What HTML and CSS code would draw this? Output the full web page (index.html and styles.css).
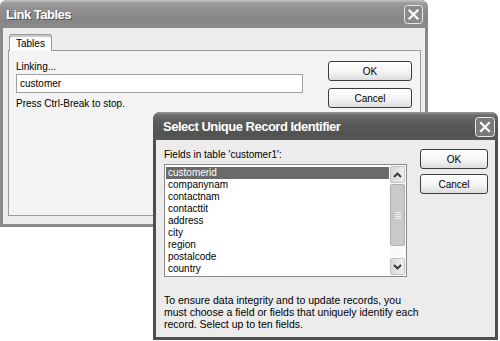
FILE: index.html
```html
<!DOCTYPE html>
<html lang="en">
<head>
  <meta charset="UTF-8" />
  <title>Link Tables</title>
  <link rel="stylesheet" href="styles.css">
</head>
<body>
  <div class="desktop">

    <!-- back window -->
    <div class="window win-link">
      <div class="titlebar">
        <span class="title">Link Tables</span>
        <span class="close">
          <svg width="19" height="19" viewBox="0 0 19 19">
            <rect x="0.5" y="0.5" width="18" height="18" rx="3" fill="#8a8a8a" stroke="#e8e8e8"/>
            <path d="M5.5 5.5 L13.5 13.5 M13.5 5.5 L5.5 13.5" stroke="#fff" stroke-width="2.2" stroke-linecap="square"/>
          </svg>
        </span>
      </div>
      <div class="win-body">
        <div class="tabs"><div class="tab">Tables</div></div>
        <div class="tab-panel">
          <div class="panel-main">
            <div class="label">Linking...</div>
            <div class="textbox">customer</div>
            <div class="label hint">Press Ctrl-Break to stop.</div>
          </div>
          <div class="buttons link-buttons">
            <button class="btn">OK</button>
            <button class="btn">Cancel</button>
          </div>
        </div>
      </div>
    </div>

    <!-- front window -->
    <div class="window win-select">
      <div class="titlebar dark">
        <span class="title">Select Unique Record Identifier</span>
        <span class="close">
          <svg width="20" height="20" viewBox="0 0 20 20">
            <rect x="0.5" y="0.5" width="19" height="19" rx="3" fill="#7a7a7a" stroke="#e8e8e8"/>
            <path d="M6 6 L14 14 M14 6 L6 14" stroke="#fff" stroke-width="2.2" stroke-linecap="square"/>
          </svg>
        </span>
      </div>
      <div class="win-body select-body">
        <div class="select-main">
          <div class="label">Fields in table 'customer1':</div>
          <div class="listbox">
            <ul class="items">
              <li class="selected">customerid</li>
              <li>companynam</li>
              <li>contactnam</li>
              <li>contacttit</li>
              <li>address</li>
              <li>city</li>
              <li>region</li>
              <li>postalcode</li>
              <li>country</li>
            </ul>
            <div class="scrollbar">
              <div class="arrow">
                <svg width="9" height="6" viewBox="0 0 9 6"><path d="M1 5 L4.5 1.5 L8 5" fill="none" stroke="#333" stroke-width="1.8"/></svg>
              </div>
              <div class="track">
                <div class="thumb"><span></span><span></span><span></span><span></span></div>
              </div>
              <div class="arrow">
                <svg width="9" height="6" viewBox="0 0 9 6"><path d="M1 1 L4.5 4.5 L8 1" fill="none" stroke="#333" stroke-width="1.8"/></svg>
              </div>
            </div>
          </div>
          <p class="note">To ensure data integrity and to update records, you must choose a field or fields that uniquely identify each record. Select up to ten fields.</p>
        </div>
        <div class="buttons select-buttons">
          <button class="btn">OK</button>
          <button class="btn">Cancel</button>
        </div>
      </div>
    </div>

  </div>
</body>
</html>
```

FILE: styles.css
```css
body {
  margin: 0;
  background: #fff;
  font-family: "Liberation Sans", Arial, sans-serif;
  font-size: 10px;
  color: #000;
}

.desktop {
  position: relative;
  width: 500px;
  height: 341px;
  overflow: hidden;
}

.window {
  position: absolute;
  display: flex;
  flex-direction: column;
  box-sizing: border-box;
  background: #6c6c6c;
  border-radius: 7px 7px 0 0;
  padding: 0 3px 3px 3px;
}

.win-link {
  left: 0;
  top: 0;
  width: 428px;
  height: 227px;
  background: #8a8a8a;
}

.win-select {
  left: 153px;
  top: 112px;
  width: 345px;
  height: 228px;
  background: #4e4e4e;
}

.titlebar {
  height: 28px;
  margin: 0 -3px;
  padding: 0 5px 0 6px;
  display: flex;
  align-items: center;
  justify-content: space-between;
  border-radius: 7px 7px 0 0;
  background: linear-gradient(#c4c4c4 0, #9c9c9c 3px, #8e8e8e 10px, #868686 22px, #8e8e8e 28px);
}

.titlebar.dark {
  padding-left: 10px;
  padding-right: 3px;
  background: linear-gradient(#9a9a9a 0, #6c6c6c 3px, #5c5c5c 10px, #525252 22px, #5a5a5a 28px);
}

.title {
  font-weight: bold;
  font-size: 13px;
  letter-spacing: -0.5px;
  color: #fff;
  text-shadow: 1px 1px 0 #555;
  margin-top: 1px;
}

.close {
  display: flex;
  margin-top: 1px;
}

.win-body {
  flex: 1;
  background: #ececec;
  display: flex;
  flex-direction: column;
  padding: 6px 4px 8px 5px;
}

.tabs {
  display: flex;
  padding-left: 1px;
}

.tab {
  height: 16px;
  padding: 0 6px;
  line-height: 17px;
  background: #fbfbfb;
  border: 1px solid #9a9a9a;
  border-bottom: none;
  border-radius: 3px 3px 0 0;
  box-shadow: inset 0 2px 0 #c8c8c8;
  margin-bottom: -1px;
  position: relative;
}

.tab-panel {
  flex: 1;
  display: flex;
  justify-content: space-between;
  background: #f3f3f3;
  border: 1px solid #9a9a9a;
  padding: 9px 8px 0 7px;
}

.label {
  line-height: 13px;
}

.textbox {
  width: 282px;
  height: 17px;
  margin: 1px 0 4px;
  padding-left: 3px;
  line-height: 17px;
  background: #fff;
  border: 1px solid #a0a0a0;
}

.buttons {
  display: flex;
  flex-direction: column;
  gap: 7px;
}

.link-buttons {
  padding-top: 1px;
}

.btn {
  width: 84px;
  height: 20px;
  font: inherit;
  color: #000;
  padding: 0;
  border: 1px solid #3c3c3c;
  border-radius: 3px;
  background: linear-gradient(#ffffff, #f2f2f2 60%, #dcdcdc);
}

.select-body {
  flex-direction: row;
  justify-content: space-between;
  padding: 8px 9px 0 8px;
}

.select-buttons {
  gap: 5px;
  padding-top: 1px;
}

.select-buttons .btn {
  width: 68px;
}

.listbox {
  width: 241px;
  height: 111px;
  margin-top: 3px;
  display: flex;
  background: #fff;
  border: 1px solid #8a8a8a;
}

.items {
  flex: 1;
  list-style: none;
  margin: 0;
  padding: 2px 0 0 1px;
}

.items li {
  height: 12px;
  line-height: 12px;
  padding-left: 2px;
}

.items li.selected {
  background: #6a6a6a;
  color: #fff;
}

.scrollbar {
  width: 17px;
  display: flex;
  flex-direction: column;
  padding: 1px 0;
  background: #fafafa;
}

.arrow {
  height: 15px;
  margin: 0 1px;
  display: flex;
  align-items: center;
  justify-content: center;
  background: linear-gradient(90deg, #d8d8d8, #eeeeee);
  border: 1px solid #c4c4c4;
  border-radius: 2px;
}

.track {
  flex: 1;
  padding-top: 1px;
}

.thumb {
  height: 60px;
  margin: 0 1px;
  display: flex;
  flex-direction: column;
  align-items: center;
  justify-content: center;
  gap: 1px;
  background: #c9c9c9;
  border: 1px solid #b0b0b0;
  border-radius: 2px;
}

.thumb span {
  width: 6px;
  height: 1px;
  background: #f0f0f0;
}

.note {
  margin: 17px 0 0;
  width: 256px;
  font-size: 10.5px;
  line-height: 12px;
}
```
